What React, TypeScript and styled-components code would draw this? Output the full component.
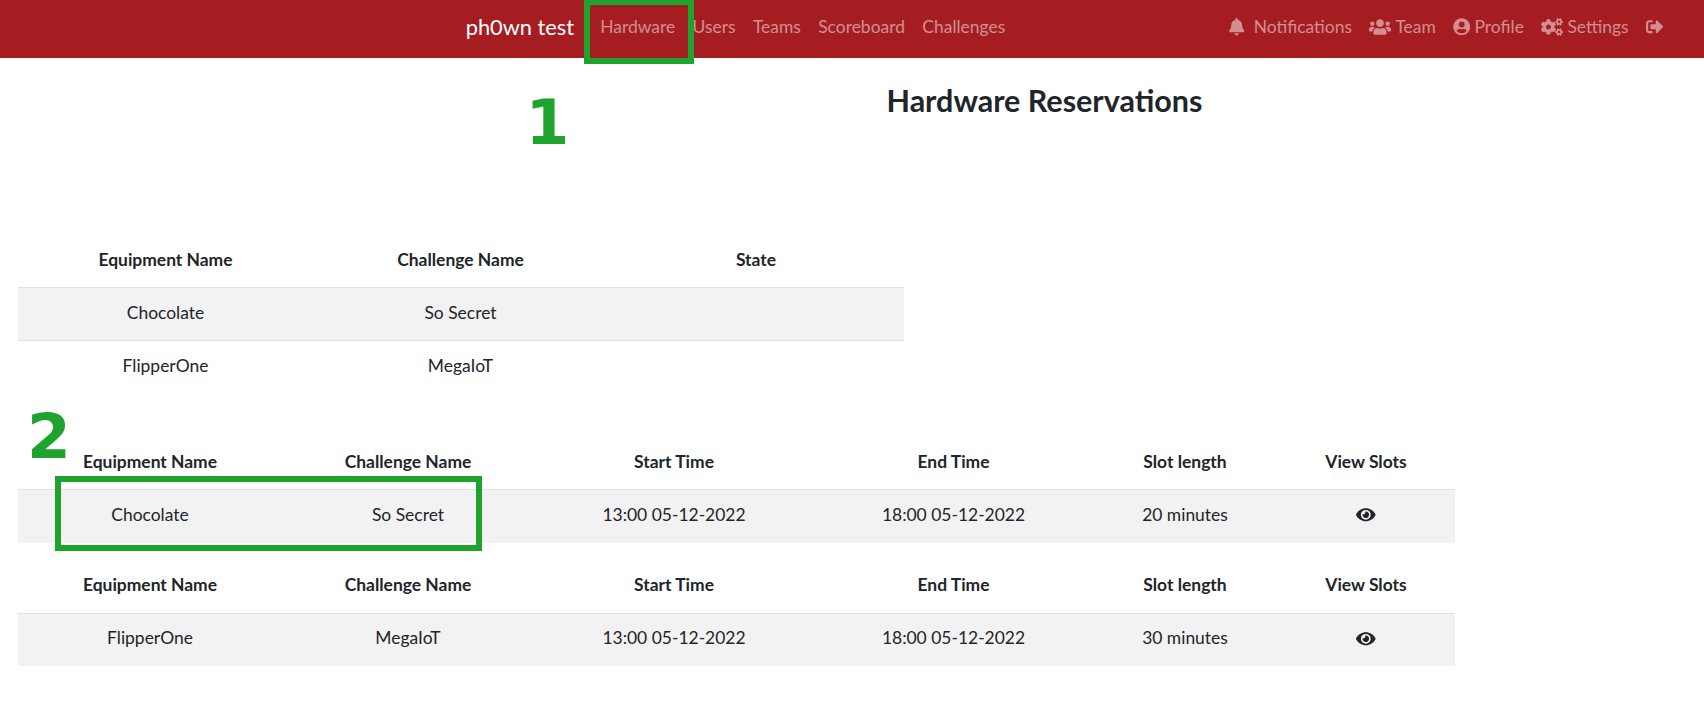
import React from "react";
import styled, { createGlobalStyle } from "styled-components";
import { FaBell, FaUsers, FaUserCircle, FaCogs, FaSignOutAlt, FaEye } from "react-icons/fa";

const Global = createGlobalStyle`
  *, *::before, *::after { box-sizing: border-box; }
  html, body { margin: 0; padding: 0; background: #fff; }
  body {
    font-family: Lato, sans-serif;
    font-size: 17.45px;
    line-height: 26.15px;
    color: #212529;
    overflow: hidden;
  }
`;

const Page = styled.div`
  position: relative;
  height: 710px;
`;

const Navbar = styled.nav`
  display: flex;
  align-items: center;
  height: 58px;
  padding: 0 32px 4px 465.7px;
  background: #a51d21;
`;

const Brand = styled.a`
  margin-right: 17.4px;
  padding-bottom: 1px;
  font-size: 21.8px;
  line-height: 32px;
  color: #fff;
  white-space: nowrap;
`;

const NavGroup = styled.div<{ $end?: boolean }>`
  display: flex;
  margin-left: ${(p) => (p.$end ? "auto" : "0")};
`;

const NavLink = styled.a`
  display: flex;
  align-items: center;
  padding: 0 8.7px;
  color: rgba(255, 255, 255, 0.5);
  white-space: nowrap;
`;

const NavIcon = styled.span<{ $gap: number }>`
  display: flex;
  margin-right: ${(p) => p.$gap}px;
`;

const Title = styled.h2`
  width: 100%;
  margin: 21px 0 0;
  padding-left: 385px;
  font-size: 30.5px;
  line-height: 42px;
  font-weight: 700;
  text-align: center;
`;

const Tables = styled.main`
  display: flex;
  flex-direction: column;
  align-items: flex-start;
  padding: 113.8px 0 0 18px;
`;

const Table = styled.table<{ $width: number; $after: number }>`
  width: ${(p) => p.$width}px;
  margin-bottom: ${(p) => p.$after}px;
  table-layout: fixed;
  border-collapse: separate;
  border-spacing: 0;
  text-align: center;
`;

const HeadCell = styled.th<{ $width: number }>`
  width: ${(p) => p.$width}px;
  padding: 12px 0 14.13px;
  font-weight: 700;
`;

const Row = styled.tr`
  &:nth-child(odd) {
    background: #f2f2f2;
  }
`;

const Cell = styled.td`
  padding: 11.8px 0 14.35px;
  border-top: 1px solid #dee2e6;
  vertical-align: top;

  svg {
    display: block;
    margin: 3.3px auto 0;
  }
`;

const Frame = styled.div<{ $x: number; $y: number; $w: number; $h: number }>`
  position: absolute;
  left: ${(p) => p.$x}px;
  top: ${(p) => p.$y}px;
  width: ${(p) => p.$w}px;
  height: ${(p) => p.$h}px;
  border: 6px solid #1fa32f;
`;

const StepNumber = styled.span<{ $x: number; $y: number }>`
  position: absolute;
  left: ${(p) => p.$x}px;
  top: ${(p) => p.$y}px;
  font: 700 63px/76px "DejaVu Sans", sans-serif;
  color: #1fa32f;
`;

const stateCols: [string, number][] = [
  ["Equipment Name", 295],
  ["Challenge Name", 295],
  ["State", 296],
];

const slotCols: [string, number][] = [
  ["Equipment Name", 264],
  ["Challenge Name", 252],
  ["Start Time", 280],
  ["End Time", 279],
  ["Slot length", 184],
  ["View Slots", 178],
];

interface DataTableProps {
  cols: [string, number][];
  rows: React.ReactNode[][];
  width: number;
  after: number;
}

function DataTable({ cols, rows, width, after }: DataTableProps) {
  return (
    <Table $width={width} $after={after}>
      <thead>
        <tr>
          {cols.map(([name, w]) => (
            <HeadCell key={name} $width={w}>{name}</HeadCell>
          ))}
        </tr>
      </thead>
      <tbody>
        {rows.map((row, i) => (
          <Row key={i}>
            {row.map((value, j) => (
              <Cell key={j}>{value}</Cell>
            ))}
          </Row>
        ))}
      </tbody>
    </Table>
  );
}

export default function App() {
  return (
    <Page>
      <Global />
      <Navbar>
        <Brand>ph0wn test</Brand>
        <NavGroup>
          {["Hardware", "Users", "Teams", "Scoreboard", "Challenges"].map((label) => (
            <NavLink key={label}>{label}</NavLink>
          ))}
        </NavGroup>
        <NavGroup $end>
          <NavLink><NavIcon $gap={8.7}><FaBell size={17.4} /></NavIcon>Notifications</NavLink>
          <NavLink><NavIcon $gap={4}><FaUsers size={22} /></NavIcon>Team</NavLink>
          <NavLink><NavIcon $gap={4}><FaUserCircle size={17.4} /></NavIcon>Profile</NavLink>
          <NavLink><NavIcon $gap={4.2}><FaCogs size={22} /></NavIcon>Settings</NavLink>
          <NavLink><FaSignOutAlt size={17.4} /></NavLink>
        </NavGroup>
      </Navbar>
      <Title>Hardware Reservations</Title>
      <Tables>
        <DataTable
          cols={stateCols}
          width={886}
          after={43.3}
          rows={[
            ["Chocolate", "So Secret", ""],
            ["FlipperOne", "MegaIoT", ""],
          ]}
        />
        <DataTable
          cols={slotCols}
          width={1437}
          after={17.7}
          rows={[["Chocolate", "So Secret", "13:00 05-12-2022", "18:00 05-12-2022", "20 minutes", <FaEye size={19.6} />]]}
        />
        <DataTable
          cols={slotCols}
          width={1437}
          after={0}
          rows={[["FlipperOne", "MegaIoT", "13:00 05-12-2022", "18:00 05-12-2022", "30 minutes", <FaEye size={19.6} />]]}
        />
      </Tables>
      <Frame $x={584} $y={-1} $w={110} $h={65} />
      <StepNumber $x={525.5} $y={85}>1</StepNumber>
      <Frame $x={55} $y={476} $w={427} $h={75} />
      <StepNumber $x={27} $y={399}>2</StepNumber>
    </Page>
  );
}
